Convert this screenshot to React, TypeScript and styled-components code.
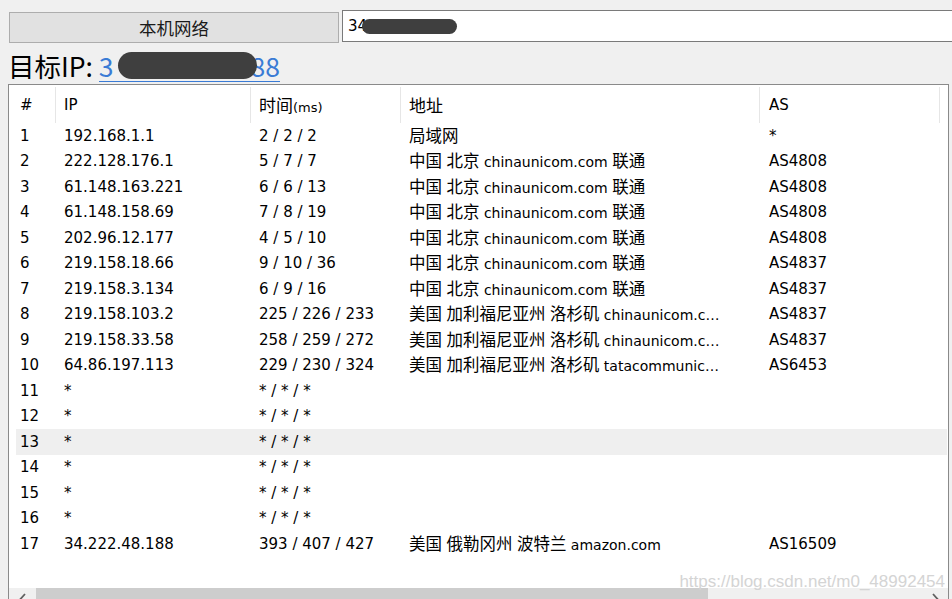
import styled, { createGlobalStyle } from "styled-components";

const latin = `"DejaVu Sans", "Noto Sans CJK SC", sans-serif`;
const han = `"Noto Sans CJK SC", "DejaVu Sans", sans-serif`;

const GlobalStyle = createGlobalStyle`
  html, body {
    margin: 0;
    padding: 0;
    overflow: hidden;
    background: #f0f0f0;
  }
  * {
    box-sizing: border-box;
  }
`;

const Page = styled.div`
  position: relative;
  height: 100vh;
  padding: 10px 0 0 8px;
  font-family: ${latin};
  color: #000;
`;

const TopBar = styled.div`
  display: flex;
  align-items: flex-start;
  gap: 3px;
  padding-left: 1px;
`;

const LocalButton = styled.button`
  width: 330px;
  height: 31px;
  margin-top: 2px;
  padding: 0;
  border: 1px solid #adadad;
  background: #e1e1e1;
  font-family: ${han};
  font-size: 17.5px;
  color: #1a1a1a;
`;

const AddressInput = styled.div`
  flex: 1;
  height: 32px;
  margin-right: -10px;
  padding: 0 5px;
  display: flex;
  align-items: center;
  background: #fff;
  border: 1px solid #7a7a7a;
  font-size: 15px;
  white-space: nowrap;
`;

const Redact = styled.span<{ $w: number; $h: number; $ml?: number; $mr?: number }>`
  position: relative;
  display: inline-block;
  width: ${(p) => p.$w}px;
  height: ${(p) => p.$h}px;
  margin-left: ${(p) => p.$ml ?? 0}px;
  margin-right: ${(p) => p.$mr ?? 0}px;
  border-radius: ${(p) => p.$h / 2}px;
  background: #3f3f3f;
`;

const TargetLine = styled.div`
  margin-top: 7px;
  height: 32px;
  line-height: 32px;
  font-family: ${han};
  font-size: 26.5px;
  white-space: nowrap;
`;

const TargetLink = styled.span`
  display: inline-block;
  line-height: 30px;
  color: #3a7bd5;
  border-bottom: 1px solid #3a7bd5;

  ${Redact} {
    vertical-align: -2px;
  }
`;

const Panel = styled.div`
  margin-top: 2px;
  width: 941px;
  border: 1px solid #8a8a8a;
  background: #fff;
`;

const ListBody = styled.div`
  height: 503px;
  overflow: hidden;
`;

const HeaderRow = styled.div`
  display: grid;
  grid-template-columns: 46px 195px 150px 359px 181px;
  height: 38px;
  padding-top: 2px;
`;

const HeadCell = styled.div<{ $pad: number; $sep?: boolean; $end?: boolean }>`
  height: 36px;
  line-height: 36px;
  padding-left: ${(p) => p.$pad}px;
  border-left: ${(p) => (p.$sep ? "1px solid #e6e6e6" : "none")};
  border-right: ${(p) => (p.$end ? "1px solid #e6e6e6" : "none")};
  font-size: 15px;
  white-space: nowrap;
`;

const Han = styled.span<{ $size?: number }>`
  font-family: ${han};
  font-size: ${(p) => p.$size ?? 16.5}px;
`;

const Small = styled.span`
  font-size: 13px;
`;

const DataRow = styled.div<{ $hl?: boolean }>`
  display: grid;
  grid-template-columns: 39px 195px 150px 359px 181px;
  align-items: center;
  height: 25.5px;
  margin: 0 1px 0 7px;
  background: ${(p) => (p.$hl ? "#efefef" : "transparent")};
  font-size: 15px;
`;

const Cell = styled.div<{ $pad: number; $padRight?: number; $size?: number }>`
  padding-left: ${(p) => p.$pad}px;
  padding-right: ${(p) => p.$padRight ?? 0}px;
  font-size: ${(p) => p.$size ?? 15}px;
  line-height: 22px;
  white-space: nowrap;
  overflow: hidden;
  text-overflow: ellipsis;
`;

const ScrollBar = styled.div`
  display: flex;
  height: 21px;
  background: #f0f0f0;
`;

const ScrollArrow = styled.div`
  width: 27px;
  display: flex;
  align-items: center;
  justify-content: center;
`;

const Thumb = styled.div`
  width: 672px;
  background: #cdcdcd;
`;

const Track = styled.div`
  flex: 1;
`;

const Watermark = styled.div`
  position: absolute;
  right: 7px;
  bottom: 7px;
  line-height: 20px;
  font-family: "Liberation Sans", Arial, sans-serif;
  font-size: 17px;
  color: #d4d4d4;
`;

type Hop = [string, string, string, string, string];

const cnBj = "中国 北京 chinaunicom.com 联通";
const usLa = "美国 加利福尼亚州 洛杉矶 chinaunicom.com";

const hops: Hop[] = [
  ["1", "192.168.1.1", "2 / 2 / 2", "局域网", "*"],
  ["2", "222.128.176.1", "5 / 7 / 7", cnBj, "AS4808"],
  ["3", "61.148.163.221", "6 / 6 / 13", cnBj, "AS4808"],
  ["4", "61.148.158.69", "7 / 8 / 19", cnBj, "AS4808"],
  ["5", "202.96.12.177", "4 / 5 / 10", cnBj, "AS4808"],
  ["6", "219.158.18.66", "9 / 10 / 36", cnBj, "AS4837"],
  ["7", "219.158.3.134", "6 / 9 / 16", cnBj, "AS4837"],
  ["8", "219.158.103.2", "225 / 226 / 233", usLa, "AS4837"],
  ["9", "219.158.33.58", "258 / 259 / 272", usLa, "AS4837"],
  ["10", "64.86.197.113", "229 / 230 / 324", "美国 加利福尼亚州 洛杉矶 tatacommunications.com", "AS6453"],
  ["11", "*", "* / * / *", "", ""],
  ["12", "*", "* / * / *", "", ""],
  ["13", "*", "* / * / *", "", ""],
  ["14", "*", "* / * / *", "", ""],
  ["15", "*", "* / * / *", "", ""],
  ["16", "*", "* / * / *", "", ""],
  ["17", "34.222.48.188", "393 / 407 / 427", "美国 俄勒冈州 波特兰 amazon.com", "AS16509"],
];

// chinese runs get the CJK font, the rest stays in the latin one
function Mixed({ text }: { text: string }) {
  const parts = text.split(/([\u3400-\u9fff]+)/);
  return (
    <>
      {parts.map((part, i) => (i % 2 === 1 ? <Han key={i}>{part}</Han> : part))}
    </>
  );
}

function Chevron({ dir }: { dir: "left" | "right" }) {
  return (
    <svg width="8" height="12" viewBox="0 0 8 12">
      <path
        d={dir === "left" ? "M6 1 L1.5 6 L6 11" : "M2 1 L6.5 6 L2 11"}
        fill="none"
        stroke="#606060"
        strokeWidth="1.8"
      />
    </svg>
  );
}

export default function App() {
  return (
    <Page>
      <GlobalStyle />
      <TopBar>
        <LocalButton>本机网络</LocalButton>
        <AddressInput>
          34
          <Redact $w={95} $h={15} $ml={-5} />
        </AddressInput>
      </TopBar>

      <TargetLine>
        目标IP:{" "}
        <TargetLink>
          3
          <Redact $w={139} $h={27} $ml={4} $mr={-6} />
          88
        </TargetLink>
      </TargetLine>

      <Panel>
        <ListBody>
          <HeaderRow>
            <HeadCell $pad={11}>#</HeadCell>
            <HeadCell $pad={8} $sep>
              IP
            </HeadCell>
            <HeadCell $pad={8} $sep>
              <Han $size={17}>时间</Han>
              <Small>(ms)</Small>
            </HeadCell>
            <HeadCell $pad={8} $sep>
              <Han $size={17}>地址</Han>
            </HeadCell>
            <HeadCell $pad={9} $sep $end>
              AS
            </HeadCell>
          </HeaderRow>

          {hops.map(([n, ip, time, addr, as]) => (
            <DataRow key={n} $hl={n === "13"}>
              <Cell $pad={4}>{n}</Cell>
              <Cell $pad={9}>{ip}</Cell>
              <Cell $pad={9}>{time}</Cell>
              <Cell $pad={9} $padRight={33} $size={14}>
                <Mixed text={addr} />
              </Cell>
              <Cell $pad={10}>{as}</Cell>
            </DataRow>
          ))}
        </ListBody>

        <ScrollBar>
          <ScrollArrow>
            <Chevron dir="left" />
          </ScrollArrow>
          <Thumb />
          <Track />
          <ScrollArrow>
            <Chevron dir="right" />
          </ScrollArrow>
        </ScrollBar>
      </Panel>

      <Watermark>https://blog.csdn.net/m0_48992454</Watermark>
    </Page>
  );
}
